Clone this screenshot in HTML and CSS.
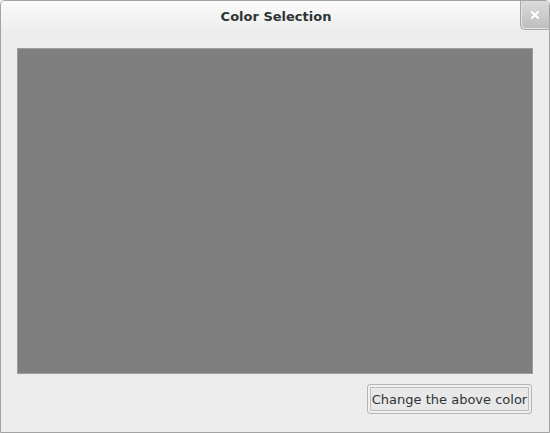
FILE: index.html
```html
<!DOCTYPE html>
<html>
<head>
<meta charset="utf-8">
<link rel="stylesheet" href="styles.css">
</head>
<body>
<div class="window">
  <div class="titlebar">
    <div></div>
    <div class="title">Color Selection</div>
    <div class="close-wrap">
      <div class="close">
        <svg width="8" height="8" viewBox="0 0 8 8"><path d="M1 1 L7 7 M7 1 L1 7" stroke="#ffffff" stroke-width="2" stroke-linecap="square"/></svg>
      </div>
    </div>
  </div>
  <div class="content">
    <div class="swatch"></div>
    <div class="actions">
      <button class="btn">Change the above color</button>
    </div>
  </div>
</div>
</body>
</html>
```

FILE: styles.css
```css
html, body { margin: 0; padding: 0; background: #ededed; }
.window {
  box-sizing: border-box;
  width: 550px;
  height: 433px;
  border: 1px solid #a3a3a3;
  border-radius: 5px 5px 0 0;
  background: #ededed;
  display: flex;
  flex-direction: column;
  overflow: hidden;
  font-family: "DejaVu Sans", sans-serif;
}
.titlebar {
  height: 30px;
  display: grid;
  grid-template-columns: 1fr auto 1fr;
  align-items: start;
  background: linear-gradient(#fbfbfb, #ededed);
}
.title {
  font-weight: bold;
  font-size: 13px;
  color: #2e3436;
  padding-top: 8px;
  padding-left: 2px;
}
.close-wrap { display: flex; justify-content: flex-end; }
.close {
  width: 29px;
  height: 30px;
  box-sizing: border-box;
  border-left: 1px solid #a8a8a8;
  border-bottom: 1px solid #a8a8a8;
  border-radius: 0 0 0 5px;
  background: linear-gradient(#dcdcdc, #bdbdbd);
  box-shadow: inset 1px -1px 0 #e2e2e2;
  display: flex;
  align-items: center;
  justify-content: center;
  margin-top: -1px;
  padding-top: 1px;
}
.content {
  flex: 1;
  display: flex;
  flex-direction: column;
  padding: 17px 16px 18px 16px;
}
.swatch {
  height: 326px;
  background: #7f7f7f;
  box-shadow: 0 0 0 1px #9d9d9d inset;
}
.actions {
  display: flex;
  justify-content: flex-end;
  padding-top: 10px;
  padding-right: 1px;
}
.btn {
  box-sizing: border-box;
  height: 30px;
  width: 165px;
  padding: 0 3px;
  border: 1px solid #b5b5b5;
  border-radius: 3px;
  background: #e8e8e8;
  box-shadow: inset 0 0 0 2px #f0f0f0, inset 0 0 0 3px #bdbdbd;
  font-family: "DejaVu Sans", sans-serif;
  font-size: 13px;
  color: #2e3436;
}
```
